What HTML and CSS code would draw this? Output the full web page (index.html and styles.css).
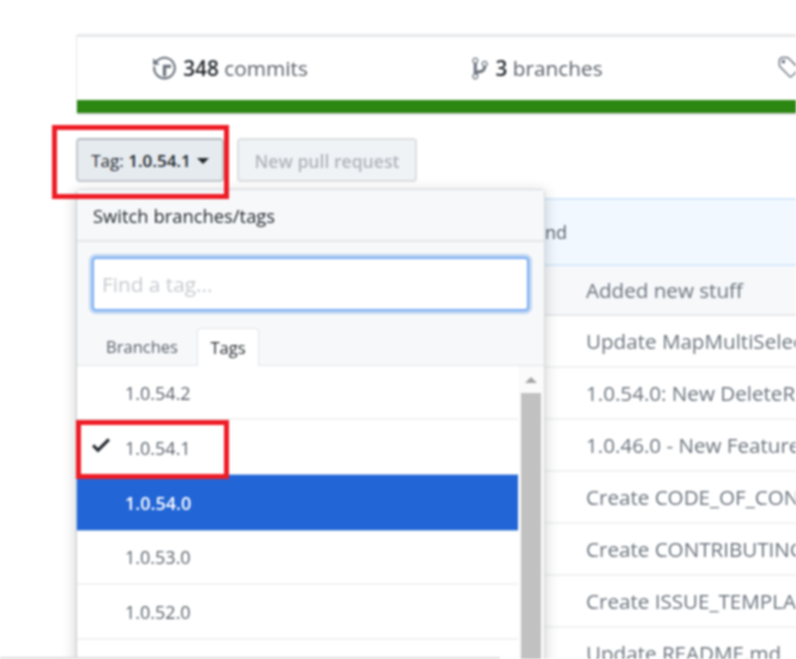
FILE: index.html
```html
<!DOCTYPE html>
<html lang="en">
<head>
<meta charset="utf-8">
<title>Tags</title>
<link rel="stylesheet" href="styles.css">
</head>
<body>
<div class="page">
  <main class="repo">
    <section class="summary">
      <div class="stats">
        <div class="stat">
          <svg class="icon icon-history" viewBox="0 0 14 16"><path d="M8 13H6V6h5v2H8v5zM7 1C4.81 1 2.87 2.02 1.59 3.59L0 2v4h4L2.5 4.5C3.55 3.17 5.17 2.3 7 2.3c3.14 0 5.7 2.56 5.7 5.7s-2.56 5.7-5.7 5.7A5.71 5.71 0 0 1 1.3 8c0-.34.03-.67.09-1H.08C.03 7.33 0 7.66 0 8c0 3.86 3.14 7 7 7s7-3.14 7-7-3.14-7-7-7z"/></svg>
          <span><b>348</b> commits</span>
        </div>
        <div class="stat">
          <svg class="icon icon-branch" viewBox="0 0 10 16"><path d="M10 5c0-1.11-.89-2-2-2a1.993 1.993 0 0 0-1 3.72v.3c-.02.52-.23.98-.63 1.38-.4.4-.86.61-1.38.63-.83.02-1.48.16-2 .45V4.72a1.993 1.993 0 0 0-1-3.72C.88 1 0 1.89 0 3a2 2 0 0 0 1 1.72v6.56c-.59.35-1 .99-1 1.72 0 1.11.89 2 2 2 1.11 0 2-.89 2-2 0-.53-.2-1-.53-1.36.09-.06.48-.41.59-.47.25-.11.56-.17.94-.17 1.05-.05 1.95-.45 2.75-1.25S8.95 7.77 9 6.73h-.02C9.59 6.37 10 5.73 10 5zM2 1.8c.66 0 1.2.55 1.2 1.2 0 .65-.55 1.2-1.2 1.2C1.35 4.2.8 3.65.8 3c0-.65.55-1.2 1.2-1.2zm0 12.41c-.66 0-1.2-.55-1.2-1.2 0-.65.55-1.2 1.2-1.2.65 0 1.2.55 1.2 1.2 0 .65-.55 1.2-1.2 1.2zm6-8c-.66 0-1.2-.55-1.2-1.2 0-.65.55-1.2 1.2-1.2.65 0 1.2.55 1.2 1.2 0 .65-.55 1.2-1.2 1.2z"/></svg>
          <span><b>3</b> branches</span>
        </div>
        <div class="stat stat-tags">
          <svg class="icon icon-tag" viewBox="0 0 15 16"><path d="M7.73 1.73C7.26 1.26 6.62 1 5.96 1H3.5C2.13 1 1 2.13 1 3.5v2.47c0 .66.27 1.3.73 1.77l6.06 6.06c.39.39 1.02.39 1.41 0l4.59-4.59a.996.996 0 0 0 0-1.41L7.73 1.73zM2.38 7.09c-.31-.3-.47-.7-.47-1.13V3.5c0-.88.72-1.59 1.59-1.59h2.47c.42 0 .83.16 1.13.47l6.14 6.13-4.73 4.73-6.13-6.15zM3.01 3h2v2H3V3h.01z"/></svg>
        </div>
      </div>
      <div class="langbar"></div>
    </section>

    <div class="toolbar">
      <div class="select">
        <button class="btn btn-tag">Tag: <b>1.0.54.1</b><i class="caret"></i></button>
        <div class="mark mark-top"></div>
        <div class="menu">
          <header class="menu-head">Switch branches/tags</header>
          <div class="menu-filter"><div class="filter-input">Find a tag...</div></div>
          <nav class="tabs"><span class="tab">Branches</span><span class="tab tab-on">Tags</span></nav>
          <div class="list-wrap">
            <ul class="list">
              <li class="item item-first">1.0.54.2</li>
              <li class="item item-sel">
                <svg class="check" viewBox="0 0 12 16"><path d="M12 5l-8 8-4-4 1.5-1.5L4 10l6.5-6.5L12 5z"/></svg>
                1.0.54.1
                <div class="mark mark-item"></div>
              </li>
              <li class="item item-on">1.0.54.0</li>
              <li class="item">1.0.53.0</li>
              <li class="item">1.0.52.0</li>
              <li class="item"></li>
            </ul>
            <div class="scroll"><i class="scroll-up"></i><div class="scroll-thumb"></div></div>
          </div>
        </div>
      </div>
      <button class="btn btn-pr">New pull request</button>
    </div>

    <div class="banner">nd</div>
    <div class="files">
      <div class="row row-head">Added new stuff</div>
      <div class="row">Update MapMultiSelectExample</div>
      <div class="row">1.0.54.0: New DeleteRow</div>
      <div class="row">1.0.46.0 - New Features</div>
      <div class="row">Create CODE_OF_CONDUCT.md</div>
      <div class="row">Create CONTRIBUTING.md</div>
      <div class="row">Create ISSUE_TEMPLATE.md</div>
      <div class="row">Update README.md</div>
    </div>
  </main>
  <div class="edge"></div>
</div>
</body>
</html>
```
FILE: styles.css
```css
* { box-sizing: border-box; }
html, body { margin: 0; height: 100%; background: #fff; overflow: hidden; }
.page {
  position: relative;
  width: 796px;
  height: 659px;
  overflow: hidden;
  font-family: "Open Sans", "Noto Sans", sans-serif;
  color: #586069;
  filter: blur(0.8px);
}
.repo { width: 1000px; margin-left: 76px; padding-top: 34px; }

.summary { border: 1px solid #e6e8ea; border-top-width: 3px; border-bottom: 2px solid #d8dadb; border-radius: 3px; }
.stats { display: grid; grid-template-columns: 307px 307px 307px; height: 63px; }
.stat { display: flex; align-items: center; justify-content: center; gap: 7px; padding-bottom: 1px; font-size: 20.8px; color: #586069; }
.stat b { color: #24292e; font-weight: 600; }
.stat-tags { justify-content: flex-start; padding-left: 86px; }
.icon { fill: #6a737d; flex: none; }
.icon-history { width: 23px; height: 26px; }
.icon-branch { width: 16px; height: 25px; }
.icon-tag { width: 24px; height: 26px; }
.langbar { height: 13px; background: #2c8612; }

.toolbar { display: flex; gap: 13px; margin-top: 23px; height: 44px; }
.select { position: relative; }
.btn { height: 44px; border-radius: 4px; font: inherit; font-size: 17px; padding: 0; }
.btn-tag {
  width: 148px;
  color: #24292e;
  background: #e6ebf0;
  border: 2px solid #c4c8cc;
  border-top-color: #b5b9bd;
}
.btn-tag b { font-weight: 600; }
.caret {
  display: inline-block;
  margin-left: 6px;
  vertical-align: 3px;
  border: 6px solid transparent;
  border-top-color: #24292e;
  border-bottom: 0;
}
.btn-pr { width: 180px; padding-top: 2px; font-size: 17.6px; color: #b0b5bb; background: #eff3f6; border: 2px solid #dcdfe2; font-weight: 600; }

.mark { position: absolute; border: 5px solid #ee1c25; pointer-events: none; }
.mark-top { left: -24px; top: -13px; width: 177px; height: 74px; z-index: 3; }
.mark-item { left: -1px; top: 0; width: 153px; height: 59px; }

.menu {
  position: absolute;
  left: 0;
  top: 51px;
  z-index: 2;
  width: 469px;
  height: 500px;
  background: #fff;
  border: 1px solid #d5d7d9;
  border-left-color: #c8cacc;
  border-radius: 4px;
  box-shadow: 0 3px 14px rgba(27, 31, 35, .22);
}
.menu-head {
  height: 52px;
  padding: 0 16px;
  display: flex;
  align-items: center;
  background: #f6f8fa;
  border-bottom: 2px solid #e3e5e8;
  color: #24292e;
  font-size: 18.4px;
  font-weight: 500;
}
.menu-filter { background: #f6f8fa; padding: 15px 15px 17px; }
.filter-input {
  height: 54px;
  padding: 0 8px;
  display: flex;
  align-items: center;
  background: #fff;
  border: 2px solid #79aef5;
  border-radius: 4px;
  box-shadow: 0 0 0 3px rgba(3, 102, 214, .22);
  color: #c6cacf;
  font-size: 20.8px;
}
.tabs { display: flex; height: 38px; padding-left: 20px; background: #f6f8fa; border-bottom: 1px solid #e3e5e8; }
.tab { width: 90px; display: flex; align-items: center; justify-content: center; font-size: 16.5px; color: #586069; }
.tab + .tab { margin-left: 10px; }
.tab-on {
  width: 62px;
  height: 38px;
  color: #24292e;
  background: #fff;
  border: 1px solid #e3e5e8;
  border-bottom: 0;
  border-radius: 4px 4px 0 0;
}

.list-wrap { display: flex; }
.list { list-style: none; margin: 0; padding: 0; width: 441px; flex: none; }
.item {
  position: relative;
  display: flex;
  align-items: center;
  height: 55px;
  padding-left: 48px;
  font-size: 18px;
  color: #586069;
  border-bottom: 2px solid #f1f2f3;
}
.item-first { height: 54px; padding-top: 1px; }
.item-sel { z-index: 1; border-bottom: 0; }
.item-on { padding-top: 1px; color: #fff; background: #2265d6; border-bottom: 0; box-shadow: 0 0 0 1px #a9c4ee; font-weight: 600; }
.check { position: absolute; left: 15px; top: 13px; width: 18px; height: 24px; fill: #24292e; }

.scroll { position: relative; flex: none; width: 26px; background: #fbfbfb; }
.scroll-up {
  position: absolute;
  left: 7px;
  top: 11px;
  border: 6px solid transparent;
  border-bottom-color: #a3a3a3;
  border-top: 0;
}
.scroll-thumb { position: absolute; left: 3px; right: 3px; top: 27px; height: 300px; background: #c1c1c1; }

.banner {
  height: 68px;
  margin-top: 16px;
  padding-left: 469px;
  display: flex;
  align-items: center;
  background: #f1f8ff;
  border: 1px solid #d6e8fc;
  border-width: 2px 0;
  font-size: 18px;
  color: #586069;
}
.row {
  height: 52px;
  padding-left: 510px;
  display: flex;
  align-items: center;
  white-space: nowrap;
  font-size: 20.6px;
  color: #6a737d;
  border-bottom: 2px solid #f1f2f3;
}
.row-head { height: 50px; background: #f6f8fa; border-bottom: 2px solid #e6e8ea; }

.edge { position: absolute; left: 0; bottom: 0; width: 500px; height: 2px; background: #dcdcdc; z-index: 4; }
```
